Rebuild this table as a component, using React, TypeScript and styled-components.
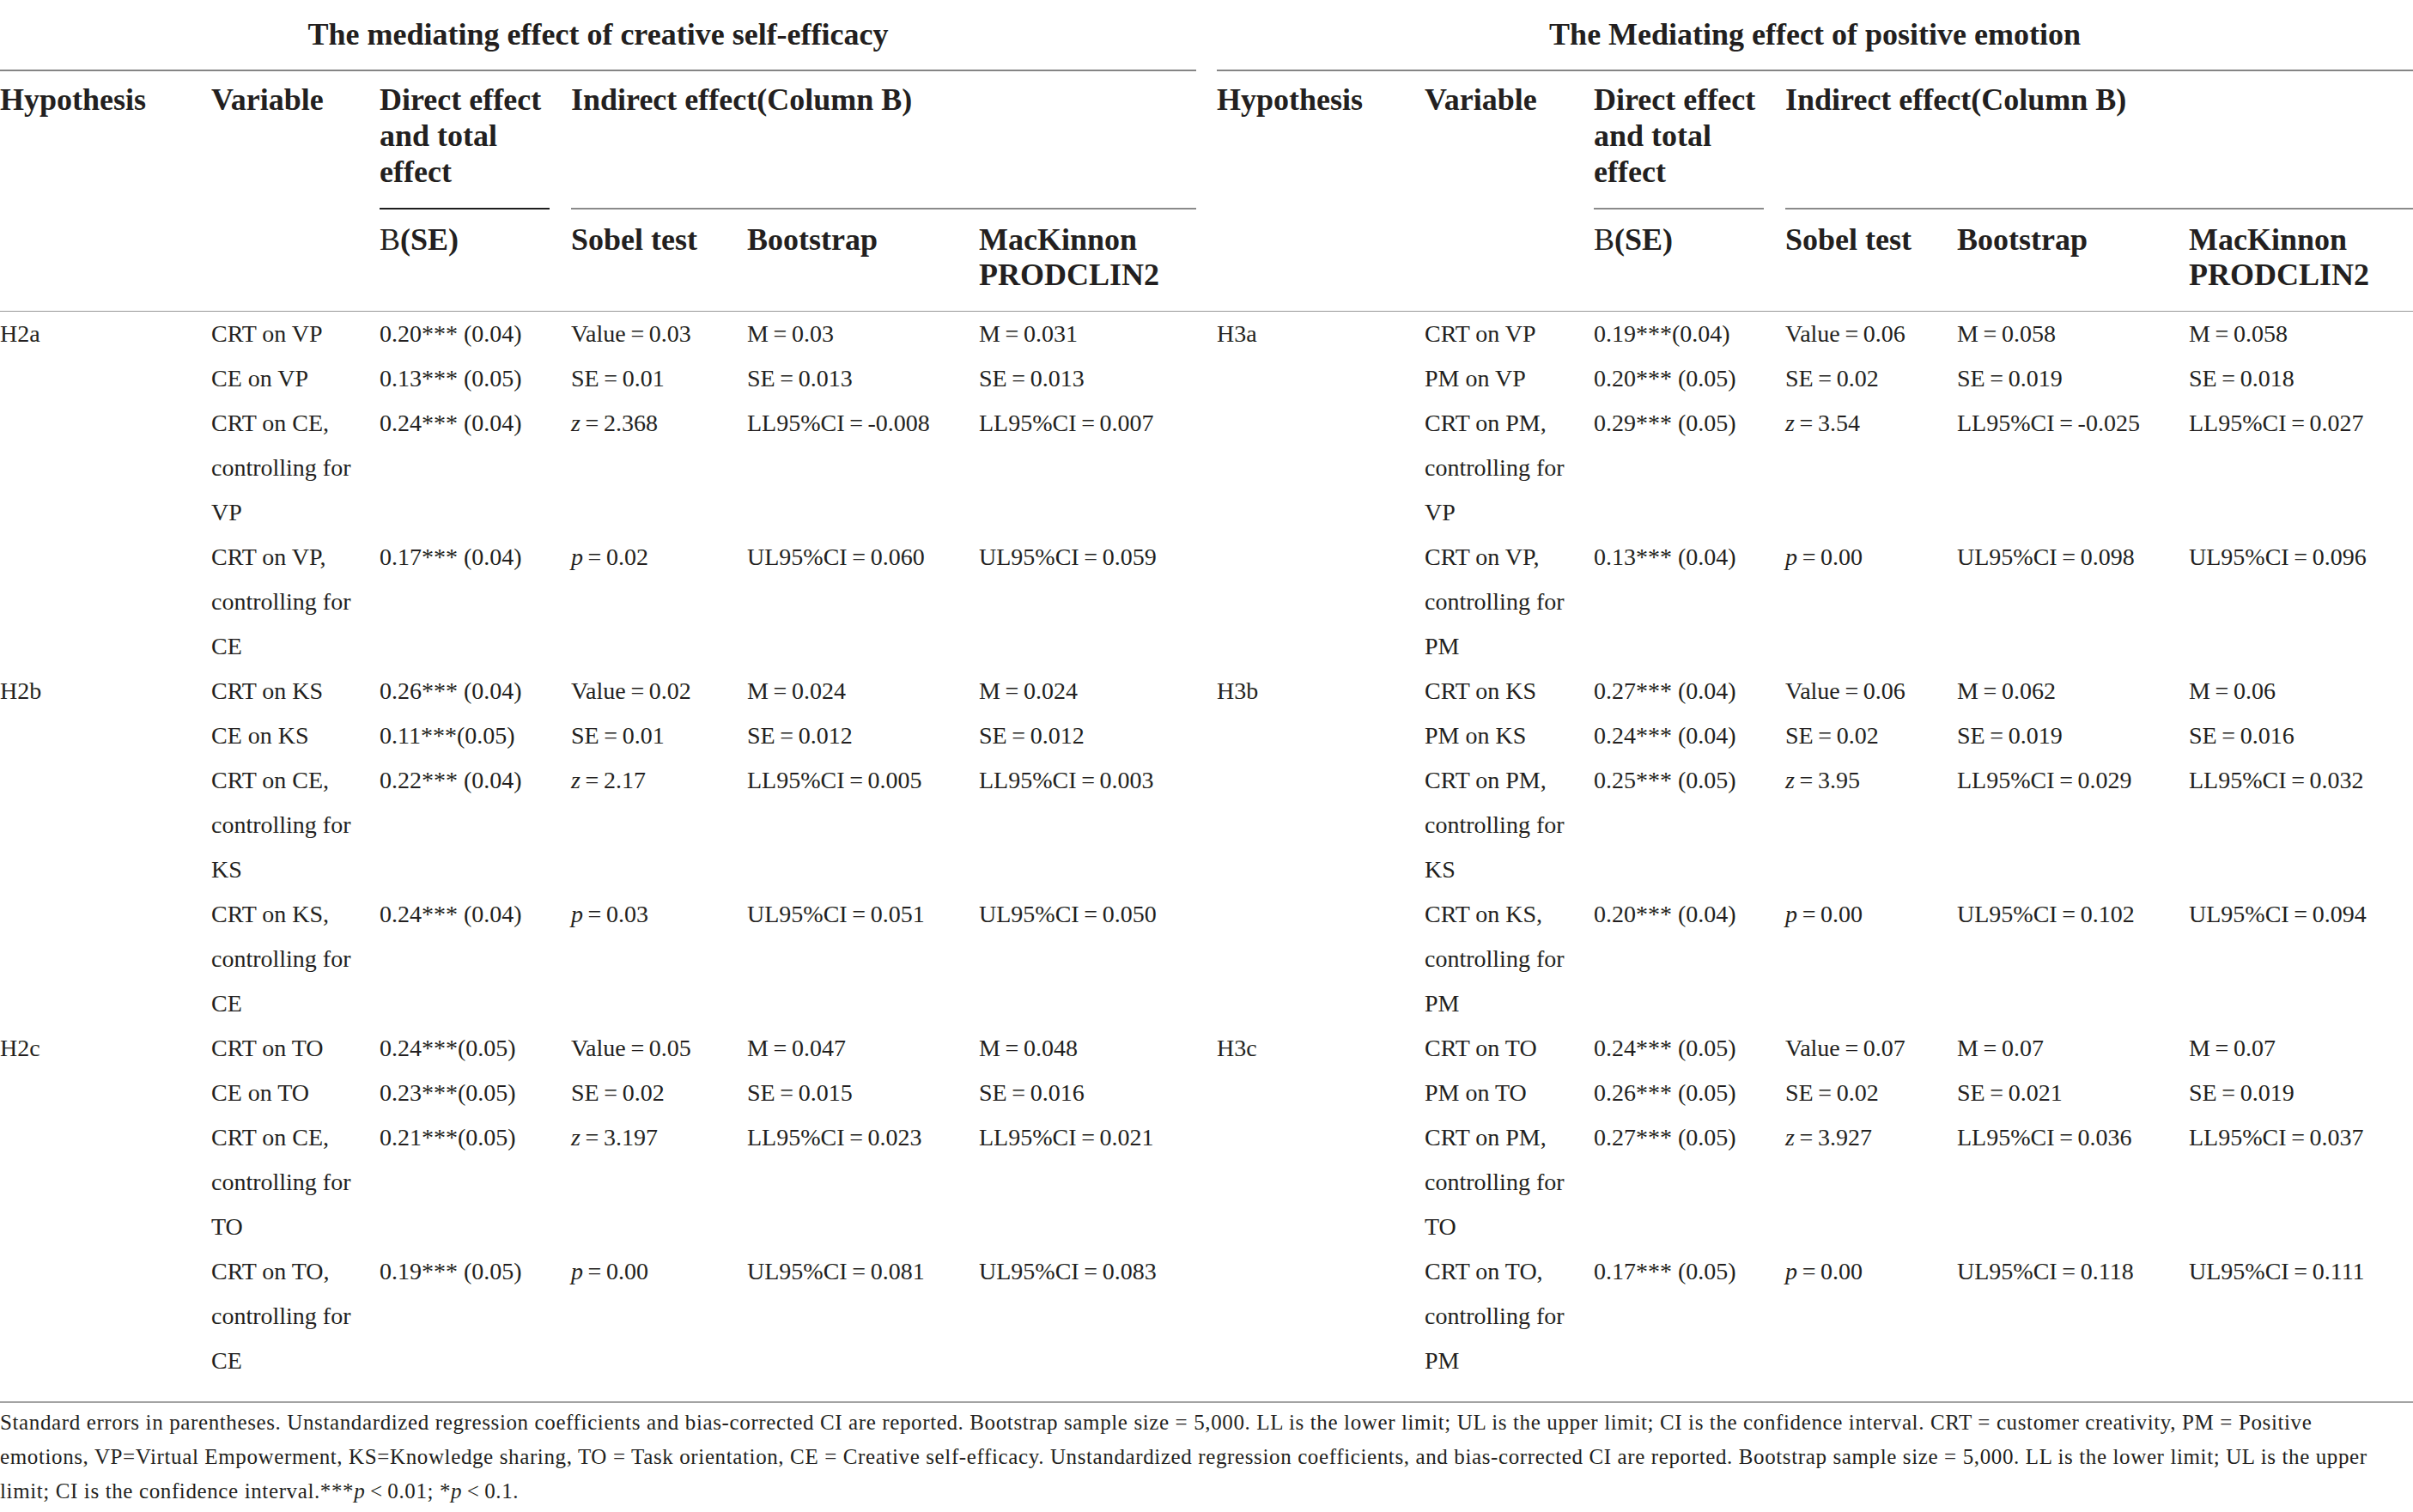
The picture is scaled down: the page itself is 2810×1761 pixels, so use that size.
import * as React from 'react';
import styled, { createGlobalStyle } from 'styled-components';

const GlobalStyle = createGlobalStyle`
  html, body {
    margin: 0;
    padding: 0;
    background: #ffffff;
  }
`;

const INK = '#231f20';
const THIN = '\u2009';

const Page = styled.div`
  width: 2810px;
  font-family: 'Liberation Serif', 'Times New Roman', serif;
  color: ${INK};
`;

const Table = styled.table`
  width: 2810px;
  table-layout: fixed;
  border-collapse: separate;
  border-spacing: 0;
`;

const Col = styled.col<{ $w: number }>`
  width: ${(p) => p.$w}px;
`;

const TitleCell = styled.th`
  font-size: 36px;
  font-weight: 700;
  line-height: 42px;
  text-align: center;
  padding: 19px 0 20px;
  border-bottom: 2px solid #858585;
`;

const Spacer = styled.th<{ $ruled?: boolean }>`
  padding: 0;
  border-bottom: ${(p) => (p.$ruled ? '1px solid #9a9a9a' : 'none')};
`;

const HeadCell = styled.th<{ $tier: 1 | 2; $ruled?: boolean; $under?: 'short' | 'full'; $dark?: boolean }>`
  font-size: 36px;
  font-weight: 700;
  line-height: ${(p) => (p.$tier === 1 ? 42 : 41)}px;
  text-align: left;
  vertical-align: top;
  padding: ${(p) => (p.$tier === 1 ? '12px 0 23px' : '15px 0 21px')};
  border-bottom: ${(p) => (p.$ruled ? '1px solid #9a9a9a' : 'none')};
  background: ${(p) =>
    p.$under
      ? `linear-gradient(${p.$dark ? '#1e1e1e' : '#8a8a8a'}, ${p.$dark ? '#1e1e1e' : '#8a8a8a'}) no-repeat left bottom / ${
          p.$under === 'short' ? 'calc(100% - 25px)' : '100%'
        } 2px`
      : 'none'};
`;

const Light = styled.span`
  font-weight: 400;
`;

const Cell = styled.td<{ $last?: boolean }>`
  font-size: 28px;
  line-height: 52px;
  vertical-align: top;
  padding: 0 0 ${(p) => (p.$last ? 21 : 0)}px;
`;

const Footnote = styled.div`
  border-top: 2px solid #a3a3a3;
  padding-top: 3px;
  font-size: 25px;
  letter-spacing: 0.62px;
  line-height: 40px;
`;

const FootLine = styled.div`
  white-space: nowrap;
`;

type Row = [string, string, string, string, string];
type Group = { hyp: string; rows: Row[] };

const leftGroups: Group[] = [
  {
    hyp: 'H2a',
    rows: [
      ['CRT on VP', '0.20*** (0.04)', 'Value=0.03', 'M=0.03', 'M=0.031'],
      ['CE on VP', '0.13*** (0.05)', 'SE=0.01', 'SE=0.013', 'SE=0.013'],
      ['CRT on CE, controlling for VP', '0.24*** (0.04)', 'z=2.368', 'LL95%CI=-0.008', 'LL95%CI=0.007'],
      ['CRT on VP, controlling for CE', '0.17*** (0.04)', 'p=0.02', 'UL95%CI=0.060', 'UL95%CI=0.059'],
    ],
  },
  {
    hyp: 'H2b',
    rows: [
      ['CRT on KS', '0.26*** (0.04)', 'Value=0.02', 'M=0.024', 'M=0.024'],
      ['CE on KS', '0.11***(0.05)', 'SE=0.01', 'SE=0.012', 'SE=0.012'],
      ['CRT on CE, controlling for KS', '0.22*** (0.04)', 'z=2.17', 'LL95%CI=0.005', 'LL95%CI=0.003'],
      ['CRT on KS, controlling for CE', '0.24*** (0.04)', 'p=0.03', 'UL95%CI=0.051', 'UL95%CI=0.050'],
    ],
  },
  {
    hyp: 'H2c',
    rows: [
      ['CRT on TO', '0.24***(0.05)', 'Value=0.05', 'M=0.047', 'M=0.048'],
      ['CE on TO', '0.23***(0.05)', 'SE=0.02', 'SE=0.015', 'SE=0.016'],
      ['CRT on CE, controlling for TO', '0.21***(0.05)', 'z=3.197', 'LL95%CI=0.023', 'LL95%CI=0.021'],
      ['CRT on TO, controlling for CE', '0.19*** (0.05)', 'p=0.00', 'UL95%CI=0.081', 'UL95%CI=0.083'],
    ],
  },
];

const rightGroups: Group[] = [
  {
    hyp: 'H3a',
    rows: [
      ['CRT on VP', '0.19***(0.04)', 'Value=0.06', 'M=0.058', 'M=0.058'],
      ['PM on VP', '0.20*** (0.05)', 'SE=0.02', 'SE=0.019', 'SE=0.018'],
      ['CRT on PM, controlling for VP', '0.29*** (0.05)', 'z=3.54', 'LL95%CI=-0.025', 'LL95%CI=0.027'],
      ['CRT on VP, controlling for PM', '0.13*** (0.04)', 'p=0.00', 'UL95%CI=0.098', 'UL95%CI=0.096'],
    ],
  },
  {
    hyp: 'H3b',
    rows: [
      ['CRT on KS', '0.27*** (0.04)', 'Value=0.06', 'M=0.062', 'M=0.06'],
      ['PM on KS', '0.24*** (0.04)', 'SE=0.02', 'SE=0.019', 'SE=0.016'],
      ['CRT on PM, controlling for KS', '0.25*** (0.05)', 'z=3.95', 'LL95%CI=0.029', 'LL95%CI=0.032'],
      ['CRT on KS, controlling for PM', '0.20*** (0.04)', 'p=0.00', 'UL95%CI=0.102', 'UL95%CI=0.094'],
    ],
  },
  {
    hyp: 'H3c',
    rows: [
      ['CRT on TO', '0.24*** (0.05)', 'Value=0.07', 'M=0.07', 'M=0.07'],
      ['PM on TO', '0.26*** (0.05)', 'SE=0.02', 'SE=0.021', 'SE=0.019'],
      ['CRT on PM, controlling for TO', '0.27*** (0.05)', 'z=3.927', 'LL95%CI=0.036', 'LL95%CI=0.037'],
      ['CRT on TO, controlling for PM', '0.17*** (0.05)', 'p=0.00', 'UL95%CI=0.118', 'UL95%CI=0.111'],
    ],
  },
];

const leftCols = [246, 196, 223, 205, 270, 253];
const rightCols = [242, 197, 223, 200, 270, 261];

const Stat: React.FC<{ text: string }> = ({ text }) => {
  const [label, value] = text.split('=');
  const italic = label === 'z' || label === 'p';
  return (
    <>
      {italic ? <i>{label}</i> : label}
      {THIN}={THIN}
      {value}
    </>
  );
};

const HalfRow: React.FC<{ hyp: string; row: Row; last: boolean }> = ({ hyp, row, last }) => (
  <>
    <Cell $last={last}>{hyp}</Cell>
    <Cell $last={last}>{row[0]}</Cell>
    <Cell $last={last}>{row[1]}</Cell>
    <Cell $last={last}>
      <Stat text={row[2]} />
    </Cell>
    <Cell $last={last}>
      <Stat text={row[3]} />
    </Cell>
    <Cell $last={last}>
      <Stat text={row[4]} />
    </Cell>
  </>
);

const HeadTop: React.FC<{ dark?: boolean }> = ({ dark }) => (
  <>
    <HeadCell $tier={1} rowSpan={2} $ruled>
      Hypothesis
    </HeadCell>
    <HeadCell $tier={1} rowSpan={2} $ruled>
      Variable
    </HeadCell>
    <HeadCell $tier={1} $under="short" $dark={dark}>
      Direct effect and total effect
    </HeadCell>
    <HeadCell $tier={1} colSpan={3} $under="full">
      Indirect effect(Column B)
    </HeadCell>
  </>
);

const HeadSub: React.FC = () => (
  <>
    <HeadCell $tier={2} $ruled>
      <Light>B</Light>(SE)
    </HeadCell>
    <HeadCell $tier={2} $ruled>
      Sobel test
    </HeadCell>
    <HeadCell $tier={2} $ruled>
      Bootstrap
    </HeadCell>
    <HeadCell $tier={2} $ruled>
      MacKinnon PRODCLIN2
    </HeadCell>
  </>
);

const App: React.FC = () => {
  const total = leftGroups.length * 4;
  return (
    <Page>
      <GlobalStyle />
      <Table>
        <colgroup>
          {leftCols.map((w, i) => (
            <Col key={`l${i}`} $w={w} />
          ))}
          <Col $w={24} />
          {rightCols.map((w, i) => (
            <Col key={`r${i}`} $w={w} />
          ))}
        </colgroup>
        <thead>
          <tr>
            <TitleCell colSpan={6}>The mediating effect of creative self-efficacy</TitleCell>
            <Spacer />
            <TitleCell colSpan={6}>The Mediating effect of positive emotion</TitleCell>
          </tr>
          <tr>
            <HeadTop dark />
            <Spacer rowSpan={2} $ruled />
            <HeadTop />
          </tr>
          <tr>
            <HeadSub />
            <HeadSub />
          </tr>
        </thead>
        <tbody>
          {leftGroups.map((group, g) =>
            group.rows.map((row, r) => {
              const last = g * 4 + r === total - 1;
              return (
                <tr key={`${g}-${r}`}>
                  <HalfRow hyp={r === 0 ? group.hyp : ''} row={row} last={last} />
                  <Cell $last={last} />
                  <HalfRow hyp={r === 0 ? rightGroups[g].hyp : ''} row={rightGroups[g].rows[r]} last={last} />
                </tr>
              );
            })
          )}
        </tbody>
      </Table>
      <Footnote>
        <FootLine>
          Standard errors in parentheses. Unstandardized regression coefficients and bias-corrected CI are reported.
          Bootstrap sample size = 5,000. LL is the lower limit; UL is the upper limit; CI is the confidence interval. CRT
          = customer creativity, PM = Positive
        </FootLine>
        <FootLine>
          emotions, VP=Virtual Empowerment, KS=Knowledge sharing, TO = Task orientation, CE = Creative self-efficacy.
          Unstandardized regression coefficients, and bias-corrected CI are reported. Bootstrap sample size = 5,000. LL
          is the lower limit; UL is the upper
        </FootLine>
        <FootLine>
          limit; CI is the confidence interval.***<i>p</i>
          {THIN}&lt;{THIN}0.01; *<i>p</i>
          {THIN}&lt;{THIN}0.1.
        </FootLine>
      </Footnote>
    </Page>
  );
};

export default App;
